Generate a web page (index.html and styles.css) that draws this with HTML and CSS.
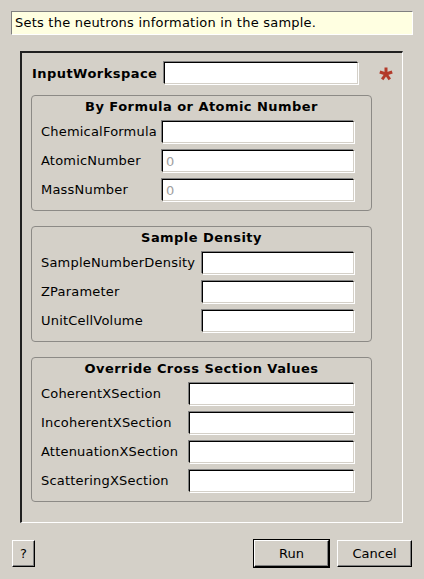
FILE: index.html
```html
<!DOCTYPE html>
<html>
<head>
<meta charset="utf-8">
<link rel="stylesheet" href="styles.css">
</head>
<body>
<div class="desc">Sets the neutrons information in the sample.</div>
<div class="frame">
  <div class="top-row">
    <label class="bold-label">InputWorkspace</label>
    <input class="field" type="text">
    <svg class="star" width="16" height="16" viewBox="0 0 16 16">
      <g stroke="#b33a2a" stroke-width="3" stroke-linecap="butt">
        <line x1="8" y1="8" x2="8" y2="1.5"/>
        <line x1="8" y1="8" x2="14.2" y2="6"/>
        <line x1="8" y1="8" x2="11.8" y2="13.3"/>
        <line x1="8" y1="8" x2="4.2" y2="13.3"/>
        <line x1="8" y1="8" x2="1.8" y2="6"/>
      </g>
    </svg>
  </div>
  <div class="group g1">
    <div class="title">By Formula or Atomic Number</div>
    <div class="rows">
      <label>ChemicalFormula</label><input class="field" type="text">
      <label>AtomicNumber</label><input class="field" type="text" placeholder="0">
      <label>MassNumber</label><input class="field" type="text" placeholder="0">
    </div>
  </div>
  <div class="group g2">
    <div class="title">Sample Density</div>
    <div class="rows">
      <label>SampleNumberDensity</label><input class="field" type="text">
      <label>ZParameter</label><input class="field" type="text">
      <label>UnitCellVolume</label><input class="field" type="text">
    </div>
  </div>
  <div class="group g3">
    <div class="title">Override Cross Section Values</div>
    <div class="rows">
      <label>CoherentXSection</label><input class="field" type="text">
      <label>IncoherentXSection</label><input class="field" type="text">
      <label>AttenuationXSection</label><input class="field" type="text">
      <label>ScatteringXSection</label><input class="field" type="text">
    </div>
  </div>
</div>
<div class="buttons">
  <button class="btn help">?</button>
  <div class="spacer"></div>
  <button class="btn run">Run</button>
  <button class="btn cancel">Cancel</button>
</div>
</body>
</html>
```

FILE: styles.css
```css
html, body {
  margin: 0;
  padding: 0;
  background: #d4d0c8;
  font-family: "DejaVu Sans", sans-serif;
  font-size: 13px;
  color: #000;
}
body {
  width: 424px;
  height: 579px;
  overflow: hidden;
}
.desc {
  margin: 11px 11px 0 11px;
  box-sizing: border-box;
  height: 24px;
  background: #ffffe1;
  border: 1px solid;
  border-color: #808080 #ffffff #ffffff #808080;
  padding-left: 3px;
  line-height: 22px;
  letter-spacing: 0.22px;
  white-space: nowrap;
}
.frame {
  margin: 16px 0 0 20px;
  box-sizing: border-box;
  width: 383px;
  height: 472px;
  border-style: solid;
  border-width: 2px 1px 1px 2px;
  border-color: #202020 #ffffff #ffffff #202020;
  padding: 9px 0 20px 9px;
  display: flex;
  flex-direction: column;
}
.top-row {
  display: grid;
  grid-template-columns: 132px 194px 20px 16px;
  align-items: center;
  height: 22px;
  padding-left: 1px;
}
.bold-label {
  font-weight: bold;
  letter-spacing: 0.45px;
  white-space: nowrap;
}
.star {
  grid-column: 4;
  display: block;
  margin-top: 1px;
}
.field {
  box-sizing: border-box;
  height: 22px;
  width: 100%;
  margin: 0;
  padding: 0 3px;
  border: 1px solid;
  border-color: #000 #d4d0c8 #d4d0c8 #000;
  box-shadow: -1px -1px 0 #808080, 1px 1px 0 #ffffff;
  background: #fff;
  font-family: "DejaVu Sans", sans-serif;
  font-size: 13px;
  outline: none;
}
.field::placeholder {
  color: #a0a0a0;
}
.group {
  box-sizing: border-box;
  width: 341px;
  border: 1px solid #8c8a86;
  border-radius: 4px;
  padding: 2px 17px 9px 9px;
  margin-top: 15px;
}
.g1 {
  margin-top: 11px;
}
.title {
  font-weight: bold;
  letter-spacing: 0.45px;
  text-align: center;
  height: 18px;
  line-height: 18px;
  margin-left: 8px;
  margin-bottom: 5px;
  white-space: nowrap;
}
.rows {
  display: grid;
  row-gap: 7px;
  align-items: center;
}
.rows label {
  line-height: 22px;
  letter-spacing: 0.2px;
  white-space: nowrap;
}
.g1 .rows { grid-template-columns: 121px 1fr; }
.g2 .rows { grid-template-columns: 161px 1fr; }
.g3 .rows { grid-template-columns: 148px 1fr; }
.buttons {
  display: flex;
  align-items: center;
  margin: 17px 12px 0 12px;
  height: 27px;
}
.spacer {
  flex: 1;
}
.btn {
  box-sizing: border-box;
  height: 27px;
  margin: 0;
  padding: 0;
  background: #d4d0c8;
  border: 1px solid;
  border-color: #ffffff #000000 #000000 #ffffff;
  box-shadow: inset -1px -1px 0 #808080;
  font-family: "DejaVu Sans", sans-serif;
  font-size: 13px;
  color: #000;
}
.help {
  width: 23px;
}
.run {
  width: 75px;
  outline: 1px solid #000;
}
.cancel {
  width: 75px;
  margin-left: 8px;
}
```
